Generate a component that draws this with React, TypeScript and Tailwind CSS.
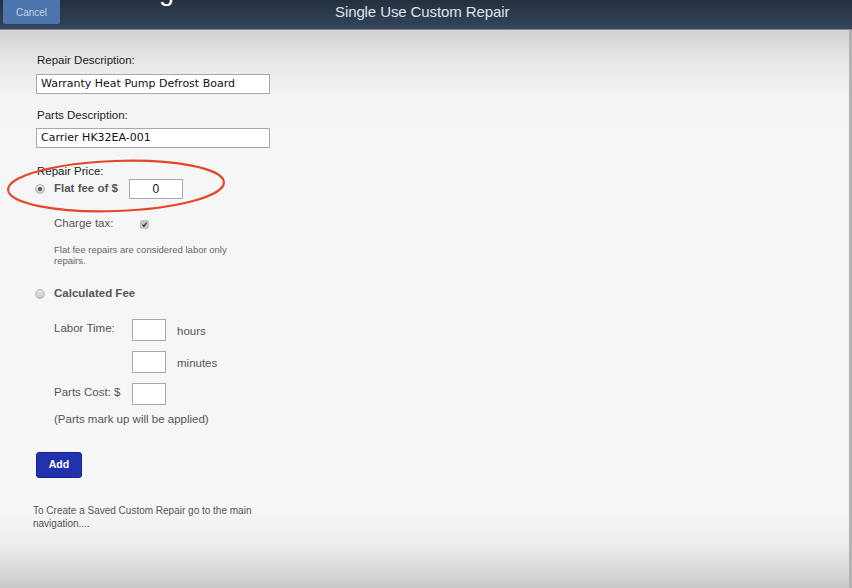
import React from "react";

const sans = "font-['Liberation_Sans',Arial,sans-serif]";

function Radio({ checked }: { checked?: boolean }) {
  return (
    <span className="flex h-[10px] w-[10px] items-center justify-center rounded-full border border-[#b9b9b9] bg-[linear-gradient(to_bottom,#e4e4e4,#c9c9c9)]">
      {checked && <span className="h-[4px] w-[4px] rounded-full bg-[#555]" />}
    </span>
  );
}

function SmallBox() {
  return <div className="h-[22px] w-[34px] border border-[#a9a9a9] bg-white" />;
}

export default function App() {
  return (
    <div className={`h-[588px] w-[852px] overflow-hidden ${sans}`}>
      {/* header */}
      <div className="relative flex h-[30px] items-start border-b border-[#7d8896] bg-[linear-gradient(to_bottom,#25303e,#33445c)]">
        <div className="pointer-events-none absolute left-[72px] top-[-24px] whitespace-nowrap text-[27px] leading-[30px] text-white">
          Creating Estimates
        </div>
        <button className="ml-[3px] h-[24px] w-[57px] rounded-b-[2px] bg-[#4b75ad] text-[10px] text-[#c7d4e4]">
          Cancel
        </button>
        <div className="ml-[275px] mt-[3px] text-[15px] leading-[18px] tracking-[-0.1px] text-[#dde3ea]">
          Single Use Custom Repair
        </div>
      </div>

      {/* body */}
      <div className="relative h-[558px] border-r-[3px] border-[#b2b2b2] bg-[linear-gradient(to_bottom,#d2d2d2_0px,#e9e9e9_35px,#f4f4f4_70px,#f6f6f6_110px,#f6f6f6_480px,#efefef_510px,#dcdcdc_538px,#c8c8c8_558px)] pl-[36px] pt-[23px]">
        <div className="pl-[1px] text-[11.5px] leading-[14px] text-[#222]">Repair Description:</div>
        <div className="mt-[7px] flex h-[20px] w-[234px] items-center border border-[#a9a9a9] bg-white pl-[4px] font-['DejaVu_Sans',Verdana,sans-serif] text-[11px] text-[#111]">
          Warranty Heat Pump Defrost Board
        </div>

        <div className="mt-[14px] pl-[1px] text-[11.5px] leading-[14px] text-[#222]">Parts Description:</div>
        <div className="mt-[6px] flex h-[20px] w-[234px] items-center border border-[#a9a9a9] bg-white pl-[4px] font-['DejaVu_Sans',Verdana,sans-serif] text-[11px] text-[#111]">
          Carrier HK32EA-001
        </div>

        <div className="mt-[16px] pl-[1px] text-[11.5px] leading-[14px] text-[#222]">Repair Price:</div>
        <div className="mt-[1px] flex items-center">
          <div className="ml-[-1px] w-[19px]">
            <Radio checked />
          </div>
          <span className="text-[11.5px] font-bold text-[#555]">Flat fee of $</span>
          <div className="ml-[11px] flex h-[20px] w-[54px] items-center justify-center border border-[#a9a9a9] bg-white text-[12px] text-[#111]">
            0
          </div>
        </div>

        <div className="ml-[18px] mt-[18px] flex h-[14px] items-center">
          <span className="w-[86px] text-[11.5px] text-[#555]">Charge tax:</span>
          <span className="flex h-[9px] w-[9px] items-center justify-center rounded-[2px] bg-[#c4c4c4]">
            <svg viewBox="0 0 10 10" className="h-[7px] w-[7px]">
              <path d="M2 5.2 L4.2 7.4 L8 2.4" fill="none" stroke="#333" strokeWidth="1.8" />
            </svg>
          </span>
        </div>

        <div className="ml-[18px] mt-[13px] w-[190px] text-[9.5px] leading-[11px] text-[#666]">
          Flat fee repairs are considered labor only repairs.
        </div>

        <div className="mt-[21px] flex h-[14px] items-center">
          <div className="ml-[-1px] w-[19px]">
            <Radio />
          </div>
          <span className="text-[11.5px] font-bold text-[#555]">Calculated Fee</span>
        </div>

        <div className="ml-[18px] mt-[18px] flex flex-col gap-[10px] text-[11.5px] text-[#555]">
          <div className="flex items-start">
            <span className="mt-[1px] w-[78px]">Labor Time:</span>
            <SmallBox />
            <span className="ml-[11px] mt-[4px]">hours</span>
          </div>
          <div className="flex items-start">
            <span className="w-[78px]" />
            <SmallBox />
            <span className="ml-[11px] mt-[4px]">minutes</span>
          </div>
          <div className="flex items-start">
            <span className="mt-[1px] w-[78px]">Parts Cost: $</span>
            <SmallBox />
          </div>
        </div>

        <div className="ml-[18px] mt-[7px] text-[11.5px] leading-[14px] text-[#555]">(Parts mark up will be applied)</div>

        <button className="mt-[26px] h-[26px] w-[46px] rounded-[3px] border border-[#17238a] bg-[#2033ad] text-[10.5px] font-bold text-white">
          Add
        </button>

        <div className="ml-[-3px] mt-[26px] w-[240px] text-[10px] leading-[13px] text-[#555]">
          To Create a Saved Custom Repair go to the main navigation....
        </div>

        {/* hand-drawn annotation */}
        <svg className="pointer-events-none absolute left-[4px] top-[126px]" width="228" height="60" viewBox="0 0 228 60">
          <ellipse cx="112" cy="30" rx="108" ry="25" transform="rotate(-2 112 30)" fill="none" stroke="#e2472b" strokeWidth="2.2" />
        </svg>
      </div>
    </div>
  );
}
